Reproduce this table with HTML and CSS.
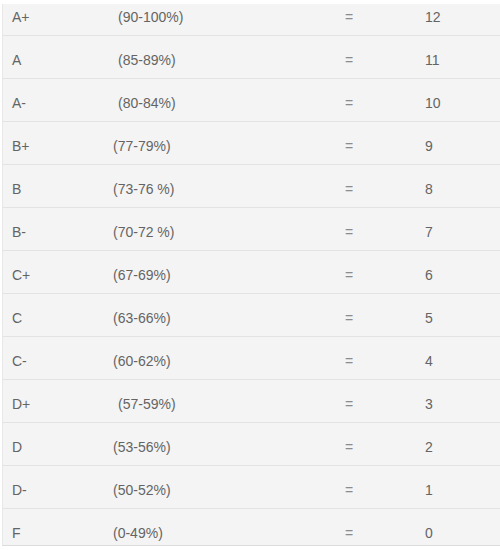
FILE: index.html
```html
<!DOCTYPE html>
<html>
<head>
<meta charset="utf-8">
<link rel="stylesheet" href="styles.css">
</head>
<body>
<div class="sheet">
  <div class="rows">
    <div class="row"><span>A+</span><span class="rng shift">(90-100%)</span><span class="eq">=</span><span>12</span></div>
    <div class="row"><span>A</span><span class="rng shift">(85-89%)</span><span class="eq">=</span><span>11</span></div>
    <div class="row"><span>A-</span><span class="rng shift">(80-84%)</span><span class="eq">=</span><span>10</span></div>
    <div class="row"><span>B+</span><span class="rng">(77-79%)</span><span class="eq">=</span><span>9</span></div>
    <div class="row"><span>B</span><span class="rng">(73-76 %)</span><span class="eq">=</span><span>8</span></div>
    <div class="row"><span>B-</span><span class="rng">(70-72 %)</span><span class="eq">=</span><span>7</span></div>
    <div class="row"><span>C+</span><span class="rng">(67-69%)</span><span class="eq">=</span><span>6</span></div>
    <div class="row"><span>C</span><span class="rng">(63-66%)</span><span class="eq">=</span><span>5</span></div>
    <div class="row"><span>C-</span><span class="rng">(60-62%)</span><span class="eq">=</span><span>4</span></div>
    <div class="row"><span>D+</span><span class="rng shift">(57-59%)</span><span class="eq">=</span><span>3</span></div>
    <div class="row"><span>D</span><span class="rng">(53-56%)</span><span class="eq">=</span><span>2</span></div>
    <div class="row"><span>D-</span><span class="rng">(50-52%)</span><span class="eq">=</span><span>1</span></div>
    <div class="row"><span>F</span><span class="rng">(0-49%)</span><span class="eq">=</span><span>0</span></div>
  </div>
</div>
</body>
</html>
```
FILE: styles.css
```css
html, body {
  margin: 0;
  padding: 0;
  background: #ffffff;
}
body {
  font-family: "Liberation Sans", Arial, sans-serif;
  font-size: 14px;
  color: #646464;
}
.sheet {
  margin: 4px 0 0 2px;
  height: 542px;
  overflow: hidden;
  background: #f4f4f4;
  border-left: 1px solid #e8e8e8;
  border-bottom: 1px solid #dcdcdc;
  box-sizing: border-box;
}
.rows {
  margin-top: -11px;
}
.row {
  display: grid;
  grid-template-columns: 101px 232px 80px auto;
  align-items: center;
  height: 43px;
  box-sizing: border-box;
  padding: 5px 0 0 9px;
  border-bottom: 1px solid #e3e3e3;
}
.rng.shift {
  padding-left: 5px;
}
.eq {
  color: #8c8c8c;
}
```
